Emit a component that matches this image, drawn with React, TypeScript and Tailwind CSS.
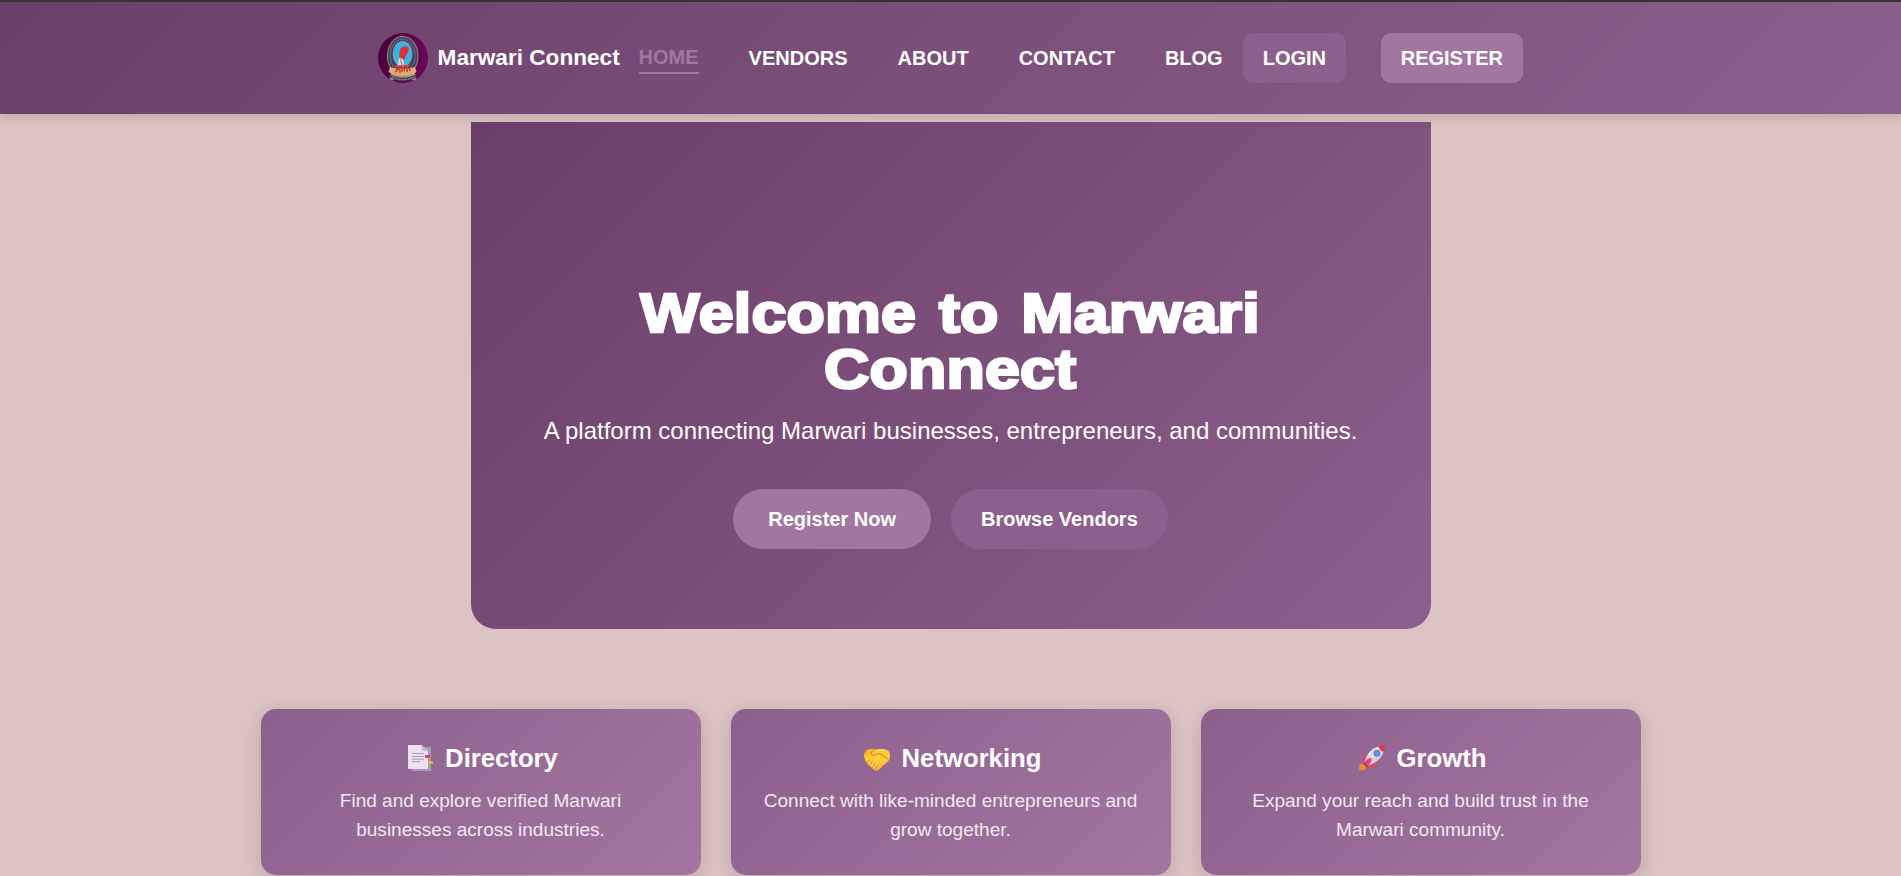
import type { ReactNode } from "react";

const navLinks = ["VENDORS", "ABOUT", "CONTACT", "BLOG"];

function Logo() {
  return (
    <svg width="50" height="50" viewBox="0 0 50 50" className="shrink-0">
      <defs>
        <linearGradient id="logoBg" x1="0" y1="0" x2="1" y2="0.3">
          <stop offset="0" stopColor="#3f0236" />
          <stop offset="1" stopColor="#6c0259" />
        </linearGradient>
        <clipPath id="logoClip">
          <circle cx="25" cy="25" r="25" />
        </clipPath>
      </defs>
      <g clipPath="url(#logoClip)">
        <rect width="50" height="50" fill="url(#logoBg)" />
        <path d="M11 48l2-8h24l2 8h-3l-3-2H17l-3 2z" fill="#b08f72" />
        <ellipse cx="24.7" cy="23" rx="15.7" ry="20" fill="#b08f72" />
        <ellipse cx="24.7" cy="23" rx="14.8" ry="19.1" fill="#3c4068" />
        <ellipse cx="24.7" cy="22.5" rx="12.4" ry="16.2" fill="none" stroke="#77758b" strokeWidth="1.6" strokeDasharray="1.2 1.1" />
        <ellipse cx="24.6" cy="21" rx="9.9" ry="13" fill="#b08f72" />
        <ellipse cx="24.6" cy="21" rx="9.2" ry="12.3" fill="#35b5e8" />
        <path d="M22.500 15.500c2-2.300 5-2.800 7.800-1.700 1 2.600-.2 5.700-2 8.200l-2.500 6-4.500-3.500.2-5z" fill="#e02f35" />
        <path d="M21.500 24.500l4 2 .5 7.500h-6.500l.8-6z" fill="#ded5d3" />
        <path d="M22.500 26l1.500 7" stroke="#77747e" strokeWidth=".8" />
        <path d="M12 34c7 2 18 2 25 0l1.500 5c-7 5-20.500 5-28 0z" fill="#d8b076" />
        <path d="M17 33h15M18.500 33v4.500q2-3 3.500 0v2.500M24 33v6M24 35q3-1 2 3M29 33v6M28 36q4-2 4 2M17 39l3-2" stroke="#e03a2a" strokeWidth="1.6" fill="none" />
        <path d="M11.500 41c8 5 18.500 5 27 0l-1 4c-7.500 4-17.500 4-25 0z" fill="#444466" />
        <path d="M14 44c7 3.500 15 3.500 22 0" stroke="#a99183" strokeWidth="1.2" strokeDasharray="1.3 1" fill="none" />
      </g>
    </svg>
  );
}

function DirectoryIcon() {
  return (
    <svg width="26" height="26" viewBox="0 0 26 26">
      <path d="M4 2h18a1 1 0 0 1 1 1v22a1 1 0 0 1-1 1H5a1 1 0 0 1-1-1z" fill="#aa9bb5" />
      <path d="M1 0h12.500L20 6v17a1 1 0 0 1-1 1H1a1 1 0 0 1-1-1V1a1 1 0 0 1 1-1z" fill="#ebe1f3" />
      <path d="M13.500 0L20 6h-5.500a1 1 0 0 1-1-1z" fill="#c6b9cf" />
      <path d="M4 8.500h12M4 11.500h12M4 14.200h12M4 16.600h8" stroke="#a99bb1" strokeWidth="1" />
      <rect x="17" y="10" width="5" height="3" rx=".5" fill="#e8406b" />
      <rect x="20" y="16" width="5" height="3" rx=".5" fill="#e4af3f" />
    </svg>
  );
}

function HandshakeIcon() {
  return (
    <svg width="26" height="26" viewBox="0 0 26 26">
      <defs>
        <linearGradient id="hands" x1="0" y1="0" x2="0.7" y2="1">
          <stop offset="0" stopColor="#f5a51d" />
          <stop offset=".35" stopColor="#ffcb35" />
          <stop offset=".7" stopColor="#ffd146" />
          <stop offset="1" stopColor="#f2a02a" />
        </linearGradient>
      </defs>
      <path d="M2 5.500Q4 3.700 7 4l5 .6L18 4q4-.3 6.300 1.700c2 2.300 2.300 5.500 1 8.500-1 2.300-3 3.800-4.800 5.400l-4.300 4q-3.200 3.500-6.200 1.200L4 19.500Q1.200 16 .2 12.500C-.3 10 .3 7.300 2 5.500z" fill="url(#hands)" />
      <path d="M9.500 5Q6.500 7.500 7.800 9.500q2.500 1.700 5.200-.5l3-.5 7.500 5.500" fill="none" stroke="#e58e16" strokeWidth="1.200" />
      <path d="M13 5.800q4-1.700 7 0" fill="none" stroke="#ffe36a" strokeWidth="1.300" />
      <path d="M5.500 14.500l-2 3.500M8.500 16l-3.300 4.500M11.500 18l-3 4.500M14 20l-2.500 4" stroke="#e08b1d" strokeWidth="1" strokeLinecap="round" />
      <path d="M14 16l3.500 4M17 13.500l3.500 4" stroke="#eda528" strokeWidth=".8" strokeLinecap="round" />
    </svg>
  );
}

function RocketIcon() {
  return (
    <svg width="26" height="26" viewBox="0 0 26 26">
      <defs>
        <linearGradient id="hull" x1="0" y1="0" x2="1" y2="1">
          <stop offset="0" stopColor="#f7eef9" />
          <stop offset="1" stopColor="#c8bccf" />
        </linearGradient>
      </defs>
      <path d="M.5 20Q2.500 17.500 5.500 19.500q2.500 2.500 1 4.500-1.500 1.500-6.200 1Q-.2 22 .5 20z" fill="#f28a2e" />
      <path d="M9.500 10.500Q5 10.500 1.500 13.500q3-.3 4.500 2.500zM16 16.500q0 5-3 8.500.2-3-2.500-4.500z" fill="#f0396b" />
      <path d="M20 1.500C13 3 8 8 5.500 17l3.500 3.500C18 18 22.500 13 25 6z" fill="url(#hull)" />
      <path d="M19 1.700Q23 0 26 .2q.2 3.300-1.700 6.800-3-1.500-5.300-5.300z" fill="#ee3045" />
      <path d="M4.500 18.500Q6.500 14 11.500 13q2 1 1 2.500-2 4.500-4.500 6z" fill="#f33d72" />
      <path d="M4.500 18.200l4 3.800" stroke="#6d4560" strokeWidth="1.400" />
      <circle cx="18" cy="8.300" r="3.200" fill="#536d9d" />
      <circle cx="18" cy="8.300" r="2.400" fill="#4ba6ee" />
    </svg>
  );
}

function Card({ icon, title, children }: { icon: ReactNode; title: string; children: ReactNode }) {
  return (
    <article className="h-[166px] rounded-[15px] bg-[linear-gradient(135deg,#8d5f8c,#a376a2)] px-[30px] py-[30px] text-center shadow-[0_5px_20px_rgba(0,0,0,0.15)]">
      <h2 className="mb-[10px] flex h-[38.4px] items-center justify-center gap-[7px] text-[25.7px] font-bold leading-[38.4px] text-white">
        <span className="flex w-[35px] justify-center">{icon}</span>
        {title}
      </h2>
      <p className="text-[19.05px] leading-[28.8px] text-white/85">{children}</p>
    </article>
  );
}

export default function App() {
  return (
    <div className="h-[876px] overflow-hidden bg-[#ddc3c3] font-['Liberation_Sans',Arial,sans-serif]">
      <header className="relative z-10 flex h-[114px] items-center justify-center border-t-2 border-[#333333] bg-[linear-gradient(135deg,#6b3f69,#8d5f8c)] font-bold text-white shadow-[0_4px_10px_rgba(0,0,0,0.12)]">
        <a className="flex items-center gap-[9.600px]">
          <Logo />
          <span className="w-[181px] whitespace-nowrap text-[22.6px] leading-[34px]">Marwari Connect</span>
        </a>
        <nav className="ml-5 flex items-center gap-[50px] text-[20px] leading-[30px]">
          <a className="border-b-2 border-[#a376a2] text-[#a376a2]">HOME</a>
          {navLinks.map((label) => (
            <a key={label}>{label}</a>
          ))}
        </nav>
        <div className="ml-5 flex gap-[34.7px] text-[20px] leading-[30px]">
          <a className="rounded-[10px] bg-[#8d5f8c] px-5 py-[10px]">LOGIN</a>
          <a className="rounded-[10px] bg-[#a376a2] px-5 py-[10px]">REGISTER</a>
        </div>
      </header>

      <main>
        <section className="mx-auto mt-2 flex h-[507px] w-[960px] flex-col items-center rounded-b-[25px] bg-[linear-gradient(135deg,#6b3f69,#8d5f8c)] pt-[163px] text-center text-white">
          <h1 className="scale-x-[1.130] text-[55.5px] font-bold leading-[56px] tracking-[0.2px] [word-spacing:4.5px] [-webkit-text-stroke:2.6px_white]">
            Welcome to Marwari
            <br />
            Connect
          </h1>
          <p className="mt-4 text-[24px] leading-[36px]">
            A platform connecting Marwari businesses, entrepreneurs, and communities.
          </p>
          <div className="mt-10 flex gap-5 text-[20px] font-bold leading-[30px]">
            <button className="rounded-[30px] bg-[#a376a2] px-[35px] py-[15px]">Register Now</button>
            <button className="rounded-[30px] bg-[#8d5f8c] px-[30px] py-[15px]">Browse Vendors</button>
          </div>
        </section>

        <section className="mx-auto mt-20 grid w-[1380px] grid-cols-3 gap-[30px]">
          <Card icon={<DirectoryIcon />} title="Directory">
            Find and explore verified Marwari businesses across industries.
          </Card>
          <Card icon={<HandshakeIcon />} title="Networking">
            Connect with like-minded entrepreneurs and grow together.
          </Card>
          <Card icon={<RocketIcon />} title="Growth">
            Expand your reach and build trust in the Marwari community.
          </Card>
        </section>
      </main>
    </div>
  );
}
